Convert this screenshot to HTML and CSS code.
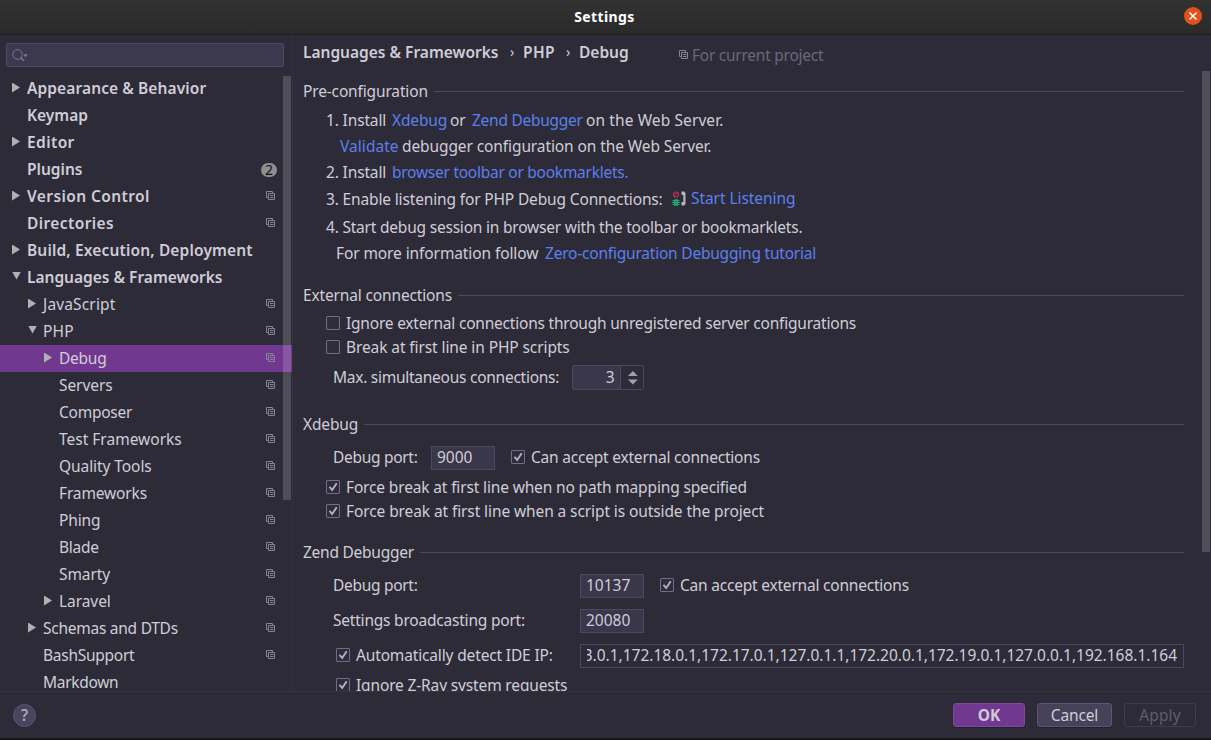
FILE: index.html
```html
<!DOCTYPE html>
<html lang="en">
<head>
<meta charset="utf-8">
<title>Settings</title>
<link rel="stylesheet" href="styles.css">
</head>
<body>
<svg width="0" height="0" class="defs">
  <symbol id="copy" viewBox="0 0 10 10"><path d="M2.5 6.5H.5V.5h6v2M2.500 2.500h6v6h-6zM4 4.500h3.500M4 6.500h3.500" fill="none" stroke="currentColor"/></symbol>
  <symbol id="check" viewBox="0 0 14 14"><path d="M3.500 6.800l2.700 3.200L10.700 3.200" fill="none" stroke="#b5b2c2" stroke-width="1.900"/></symbol>
</svg>
<div class="window">
  <header class="titlebar"><h1 class="title">Settings</h1>
    <svg class="close" viewBox="0 0 18 18"><circle cx="9" cy="9" r="9" fill="#e2501c"/><path d="M5.500 5.500l7 7M12.500 5.500l-7 7" stroke="#fff" stroke-width="1.500"/></svg>
  </header>
  <div class="body">
    <aside class="sidebar">
      <div class="search"><svg width="18" height="14" viewBox="0 0 18 14"><circle cx="5.500" cy="5.500" r="4.800" fill="none" stroke="#7f779b"/><path d="M8.800 8.800l3.200 3.200" stroke="#7f779b" stroke-width="1.500"/><path d="M11.300 5.300h4.400l-2.200 3z" fill="#7f779b"/></svg></div>
      <ul class="tree">
        <li class="top"><i class="right"></i><span class="s10">Appearance &amp; Behavior</span></li>
        <li class="top"><i></i><span>Keymap</span></li>
        <li class="top"><i class="right"></i><span class="s40">Editor</span></li>
        <li class="top"><i></i><span>Plugins</span><b class="badge">2</b></li>
        <li class="top"><i class="right"></i><span class="s40">Version Control</span><svg class="copy"><use href="#copy"/></svg></li>
        <li class="top"><i></i><span class="s40">Directories</span><svg class="copy"><use href="#copy"/></svg></li>
        <li class="top"><i class="right"></i><span class="s15">Build, Execution, Deployment</span></li>
        <li class="top"><i class="down"></i><span>Languages &amp; Frameworks</span></li>
        <li class="l2"><i class="right"></i><span class="s15">JavaScript</span><svg class="copy"><use href="#copy"/></svg></li>
        <li class="l2"><i class="down"></i><span class="s15">PHP</span><svg class="copy"><use href="#copy"/></svg></li>
        <li class="l3 selected"><i class="right"></i><span class="n25">Debug</span><svg class="copy"><use href="#copy"/></svg></li>
        <li class="l3"><i></i><span class="n5">Servers</span><svg class="copy"><use href="#copy"/></svg></li>
        <li class="l3"><i></i><span class="n25">Composer</span><svg class="copy"><use href="#copy"/></svg></li>
        <li class="l3"><i></i><span class="s0">Test Frameworks</span><svg class="copy"><use href="#copy"/></svg></li>
        <li class="l3"><i></i><span class="n5">Quality Tools</span><svg class="copy"><use href="#copy"/></svg></li>
        <li class="l3"><i></i><span>Frameworks</span><svg class="copy"><use href="#copy"/></svg></li>
        <li class="l3"><i></i><span>Phing</span><svg class="copy"><use href="#copy"/></svg></li>
        <li class="l3"><i></i><span class="n25">Blade</span><svg class="copy"><use href="#copy"/></svg></li>
        <li class="l3"><i></i><span class="n5">Smarty</span><svg class="copy"><use href="#copy"/></svg></li>
        <li class="l3"><i class="right"></i><span class="n5">Laravel</span><svg class="copy"><use href="#copy"/></svg></li>
        <li class="l2"><i class="right"></i><span class="n25">Schemas and DTDs</span><svg class="copy"><use href="#copy"/></svg></li>
        <li class="l2"><i></i><span class="n25">BashSupport</span><svg class="copy"><use href="#copy"/></svg></li>
        <li class="l2"><i></i><span class="n30">Markdown</span></li>
      </ul>
      <div class="scroll side-scroll"></div>
    </aside>
    <main class="content">
      <div class="crumbs"><span class="c1">Languages &amp; Frameworks</span><span class="sep">›</span><span class="c2">PHP</span><span class="sep">›</span><span class="c3">Debug</span><span class="scope"><svg class="copy"><use href="#copy"/></svg>For current project</span></div>
      <section class="group pre">
        <h2>Pre-configuration</h2>
        <div class="line"><span class="w66">1. Install</span><a class="w58">Xdebug</a><span class="w22">or</span><a class="w114 n25">Zend Debugger</a><span class="s10">on the Web Server.</span></div>
        <div class="line validate"><a class="w62 s5">Validate</a><span class="n10">debugger configuration on the Web Server.</span></div>
        <div class="line"><span class="w66">2. Install</span><a class="n25">browser toolbar or bookmarklets.</a></div>
        <div class="line enable"><span class="w345">3. Enable listening for PHP Debug Connections:</span><svg class="listen" viewBox="0 0 14 16"><circle cx="4" cy="3.500" r="2.500" fill="none" stroke="#c92f58" stroke-width="1.200"/><path d="M2.300 5.200l3.400-3.400" stroke="#c92f58"/><path d="M2.500 9h3v5h-3zM.5 9.500h7M0 11.500h8M.5 13.500h7M4 8v7" fill="none" stroke="#21a86b" stroke-width="1.200"/><path d="M9.500.5h2.800L13.500 2v11l-1.200 1.500H9.500v-3.500h1.800V4H9.500z" fill="#b5b3bf"/></svg><a class="start n5">Start Listening</a></div>
        <div class="line session"><span class="n20">4. Start debug session in browser with the toolbar or bookmarklets.</span></div>
        <div class="line more"><span class="w209 n10">For more information follow</span><a class="n20">Zero-configuration Debugging tutorial</a></div>
      </section>
      <section class="group external">
        <h2>External connections</h2>
        <label class="check-row"><i class="box"></i><span class="n20">Ignore external connections through unregistered server configurations</span></label>
        <label class="check-row"><i class="box"></i><span class="n10">Break at first line in PHP scripts</span></label>
        <div class="field max"><span class="w239 n25">Max. simultaneous connections:</span><div class="spinner"><span>3</span><svg viewBox="0 0 22 23"><path d="M6 10l5-5 5 5zM6 13.500h10l-5 5z" fill="#a19fae"/></svg></div></div>
      </section>
      <section class="group xdebug">
        <h2>Xdebug</h2>
        <div class="field"><span class="w98 n30">Debug port:</span><div class="input">9000</div><label class="accept"><i class="box"><svg><use href="#check"/></svg></i><span class="n20">Can accept external connections</span></label></div>
        <label class="check-row first"><i class="box"><svg><use href="#check"/></svg></i><span>Force break at first line when no path mapping specified</span></label>
        <label class="check-row"><i class="box"><svg><use href="#check"/></svg></i><span class="n10">Force break at first line when a script is outside the project</span></label>
      </section>
      <section class="group zend">
        <h2>Zend Debugger</h2>
        <div class="field"><span class="w247 n30">Debug port:</span><div class="input">10137</div><label class="accept"><i class="box"><svg><use href="#check"/></svg></i><span class="n20">Can accept external connections</span></label></div>
        <div class="field"><span class="w247 n20">Settings broadcasting port:</span><div class="input">20080</div></div>
        <div class="field"><label class="ip"><i class="box"><svg><use href="#check"/></svg></i><span>Automatically detect IDE IP:</span></label><div class="input wide"><div class="clip"><span>3.0.1,172.18.0.1,172.17.0.1,127.0.1.1,172.20.0.1,172.19.0.1,127.0.0.1,192.168.1.164</span></div></div></div>
        <label class="check-row zray"><i class="box"><svg><use href="#check"/></svg></i><span>Ignore Z-Ray system requests</span></label>
      </section>
      <div class="scroll main-scroll"></div>
    </main>
  </div>
  <footer class="footer"><button class="help">?</button><button class="btn ok">OK</button><button class="btn cancel">Cancel</button><button class="btn apply">Apply</button></footer>
</div>
</body>
</html>
```
FILE: styles.css
```css
* { box-sizing: border-box; }
body { margin: 0; background: #2d2b38; color: #cfcdd6; font: 15.5px/20px "Noto Sans", sans-serif; letter-spacing: -0.15px; overflow: hidden; }
h1, h2, ul { margin: 0; padding: 0; font: inherit; }
i { font-style: normal; }
.defs { position: absolute; }
.window { width: 1211px; height: 740px; display: flex; flex-direction: column; border-bottom: 2px solid #17161b; }
.titlebar { height: 35px; flex: none; position: relative; background: linear-gradient(#323232, #2a2a2a); border-bottom: 1px solid #1f1f1f; }
.title { text-align: center; font-weight: 700; font-size: 14px; line-height: 33px; color: #fff; letter-spacing: .4px; padding-right: 2px; }
.close { position: absolute; width: 18px; height: 18px; left: 1184px; top: 7px; }
.body { height: 656px; flex: none; display: flex; }
.sidebar { width: 293px; flex: none; position: relative; overflow: hidden; border-right: 1px solid #32323a; padding-top: 8px; }
.search { margin-left: 6px; width: 278px; height: 24px; border: 1px solid #4d4966; border-radius: 2px; background: #3c384d; padding: 5px 5px; }
.search svg { display: block; }
.tree { list-style: none; margin-top: 8px; }
.tree li { height: 27px; width: 292px; display: flex; align-items: center; padding: 0 0 2px 11px; white-space: nowrap; }
.tree li.l2 { padding-left: 27px; }
.tree li.l3 { padding-left: 43px; }
.top { font-weight: 600; letter-spacing: 0; }
.tree i { width: 16px; flex: none; }
.tree i::before { content: ""; display: block; margin-left: 1px; }
.tree .right::before { width: 8px; height: 10px; background: #b0b0b0; clip-path: polygon(0 0, 100% 50%, 0 100%); }
.tree .down::before { width: 9px; height: 8px; background: #b0b0b0; clip-path: polygon(0 0, 100% 0, 50% 100%); margin-top: -2px; }
.selected { background: #70398f; }
.copy { width: 10px; height: 10px; flex: none; color: #85819a; }
.tree .copy { margin-left: auto; margin-right: 16px; }
.badge { margin: 3px 15px 0 auto; width: 16px; height: 14px; border-radius: 7px; background: #8e8e90; color: #111; font: 14px/14px "Noto Sans", sans-serif; text-align: center; }
.scroll { position: absolute; background: rgba(255,255,255,.16); width: 8px; }
.side-scroll { left: 283px; top: 41px; height: 424px; }
.main-scroll { right: 1px; top: 36px; height: 481px; }
.content { flex: 1; position: relative; overflow: hidden; padding: 7px 27px 0 10px; white-space: nowrap; }
.crumbs { height: 20px; display: flex; font-weight: 600; align-items: center; letter-spacing: 0; }
.c1 { width: 207px; } .c2 { width: 43px; letter-spacing: .4px; } .c3 { width: 100px; }
.sep { width: 13px; font-size: 14px; font-weight: 400; }
.scope { font-weight: 400; color: #6a677a; display: flex; align-items: center; gap: 3px; padding-top: 6px; letter-spacing: -.25px; }
.group { display: flex; flex-direction: column; }
.pre { margin-top: 19px; }
.external { margin-top: 19px; }
.xdebug { margin-top: 24px; }
.zend { margin-top: 19px; }
h2 { height: 20px; margin-bottom: 6px; display: flex; align-items: center; gap: 6px; }
h2::after { content: ""; flex: 1; height: 1px; background: #4b485f; margin-top: 1px; }
.zend h2 { letter-spacing: -.25px; }
.line { height: 26px; display: flex; align-items: center; padding-left: 23px; }
.validate { padding-left: 37px; } .enable { margin-top: 1px; } .session { margin-top: 2px; } .more { padding-left: 33px; }
a { color: #5c7fec; }
.w66 { width: 66px; } .w58 { width: 58px; } .w22 { width: 22px; } .w114 { width: 114px; } .w62 { width: 62px; } .w345 { width: 345px; } .w209 { width: 209px; } .w239 { width: 239px; } .w98 { width: 98px; } .w247 { width: 247px; }
/* tracking steps */
.s40 { letter-spacing: .4px; } .s15 { letter-spacing: .15px; } .s10 { letter-spacing: .1px; } .s5 { letter-spacing: .05px; } .s0 { letter-spacing: 0; }
.n5 { letter-spacing: -.07px; } .n10 { letter-spacing: -.1px; } .n20 { letter-spacing: -.21px; } .n25 { letter-spacing: -.26px; } .n30 { letter-spacing: -.3px; }
.listen { width: 14px; height: 16px; margin: 0 5px 0 1px; }
.start { margin-top: -2px; }
.check-row, .accept, .ip { display: flex; align-items: center; gap: 6px; height: 24px; }
.check-row { padding-left: 23px; }
.box { width: 14px; height: 14px; flex: none; border: 1px solid #716b8c; border-radius: 1px; background: #2f2c3c; }
.box svg { display: block; width: 14px; height: 14px; margin: -1px; }
.field { height: 24px; display: flex; align-items: center; padding-left: 30px; }
.field > span, .field label > span { margin-top: -2px; }
.field label .box { margin-top: -2px; }
.max { margin-top: 6px; height: 25px; }
.spinner { width: 72px; height: 25px; display: flex; border: 1px solid #4b4860; border-radius: 2px; }
.spinner span { width: 49px; background: #3a374a; border-right: 1px solid #4b4860; text-align: right; padding: 1px 6px 0 0; }
.spinner svg { width: 22px; height: 23px; margin-left: 1px; margin-right: -1px; }
.input { width: 64px; height: 24px; border: 1px solid #4b4860; background: #3a374a; padding: 0 5px; line-height: 21px; letter-spacing: 0; }
.accept { margin-left: 16px; }
.xdebug .field { margin-top: 5px; height: 25px; align-items: flex-end; }
.xdebug .field > span { margin-bottom: 3px; }
.first { margin-top: 5px; }
.zend .field { margin-top: 11px; }
.zend h2 + .field { margin-top: 6px; }
.ip { width: 244px; margin-left: 3px; }
.wide { width: 604px; background: #2d2b38; padding-right: 6px; letter-spacing: -.015px; }
.clip { overflow: hidden; display: flex; justify-content: flex-end; margin-left: 1px; }
.zray { padding-left: 33px; margin-top: 5px; }
.footer { height: 47px; flex: none; border-top: 1px solid #34343a; display: flex; align-items: center; padding: 0 15px 0 13px; }
button { font: inherit; letter-spacing: inherit; padding: 0; color: inherit; border: 1px solid #5a5674; }
.help { width: 23px; height: 23px; margin-right: auto; border-radius: 50%; background: #494560; font-weight: 600; color: #aaa7b8; line-height: 20px; }
.btn { height: 24px; border-radius: 3px; background: #464259; margin-left: 12px; width: 75px; line-height: 21px; box-shadow: 0 1px 1px #22202a; }
.ok { width: 72px; background: #70398f; border-color: #7c4b9a; font-weight: 700; }
.apply { width: 72px; background: none; border-color: #3f3c52; color: #5f5b70; box-shadow: none; letter-spacing: .1px; }
```
